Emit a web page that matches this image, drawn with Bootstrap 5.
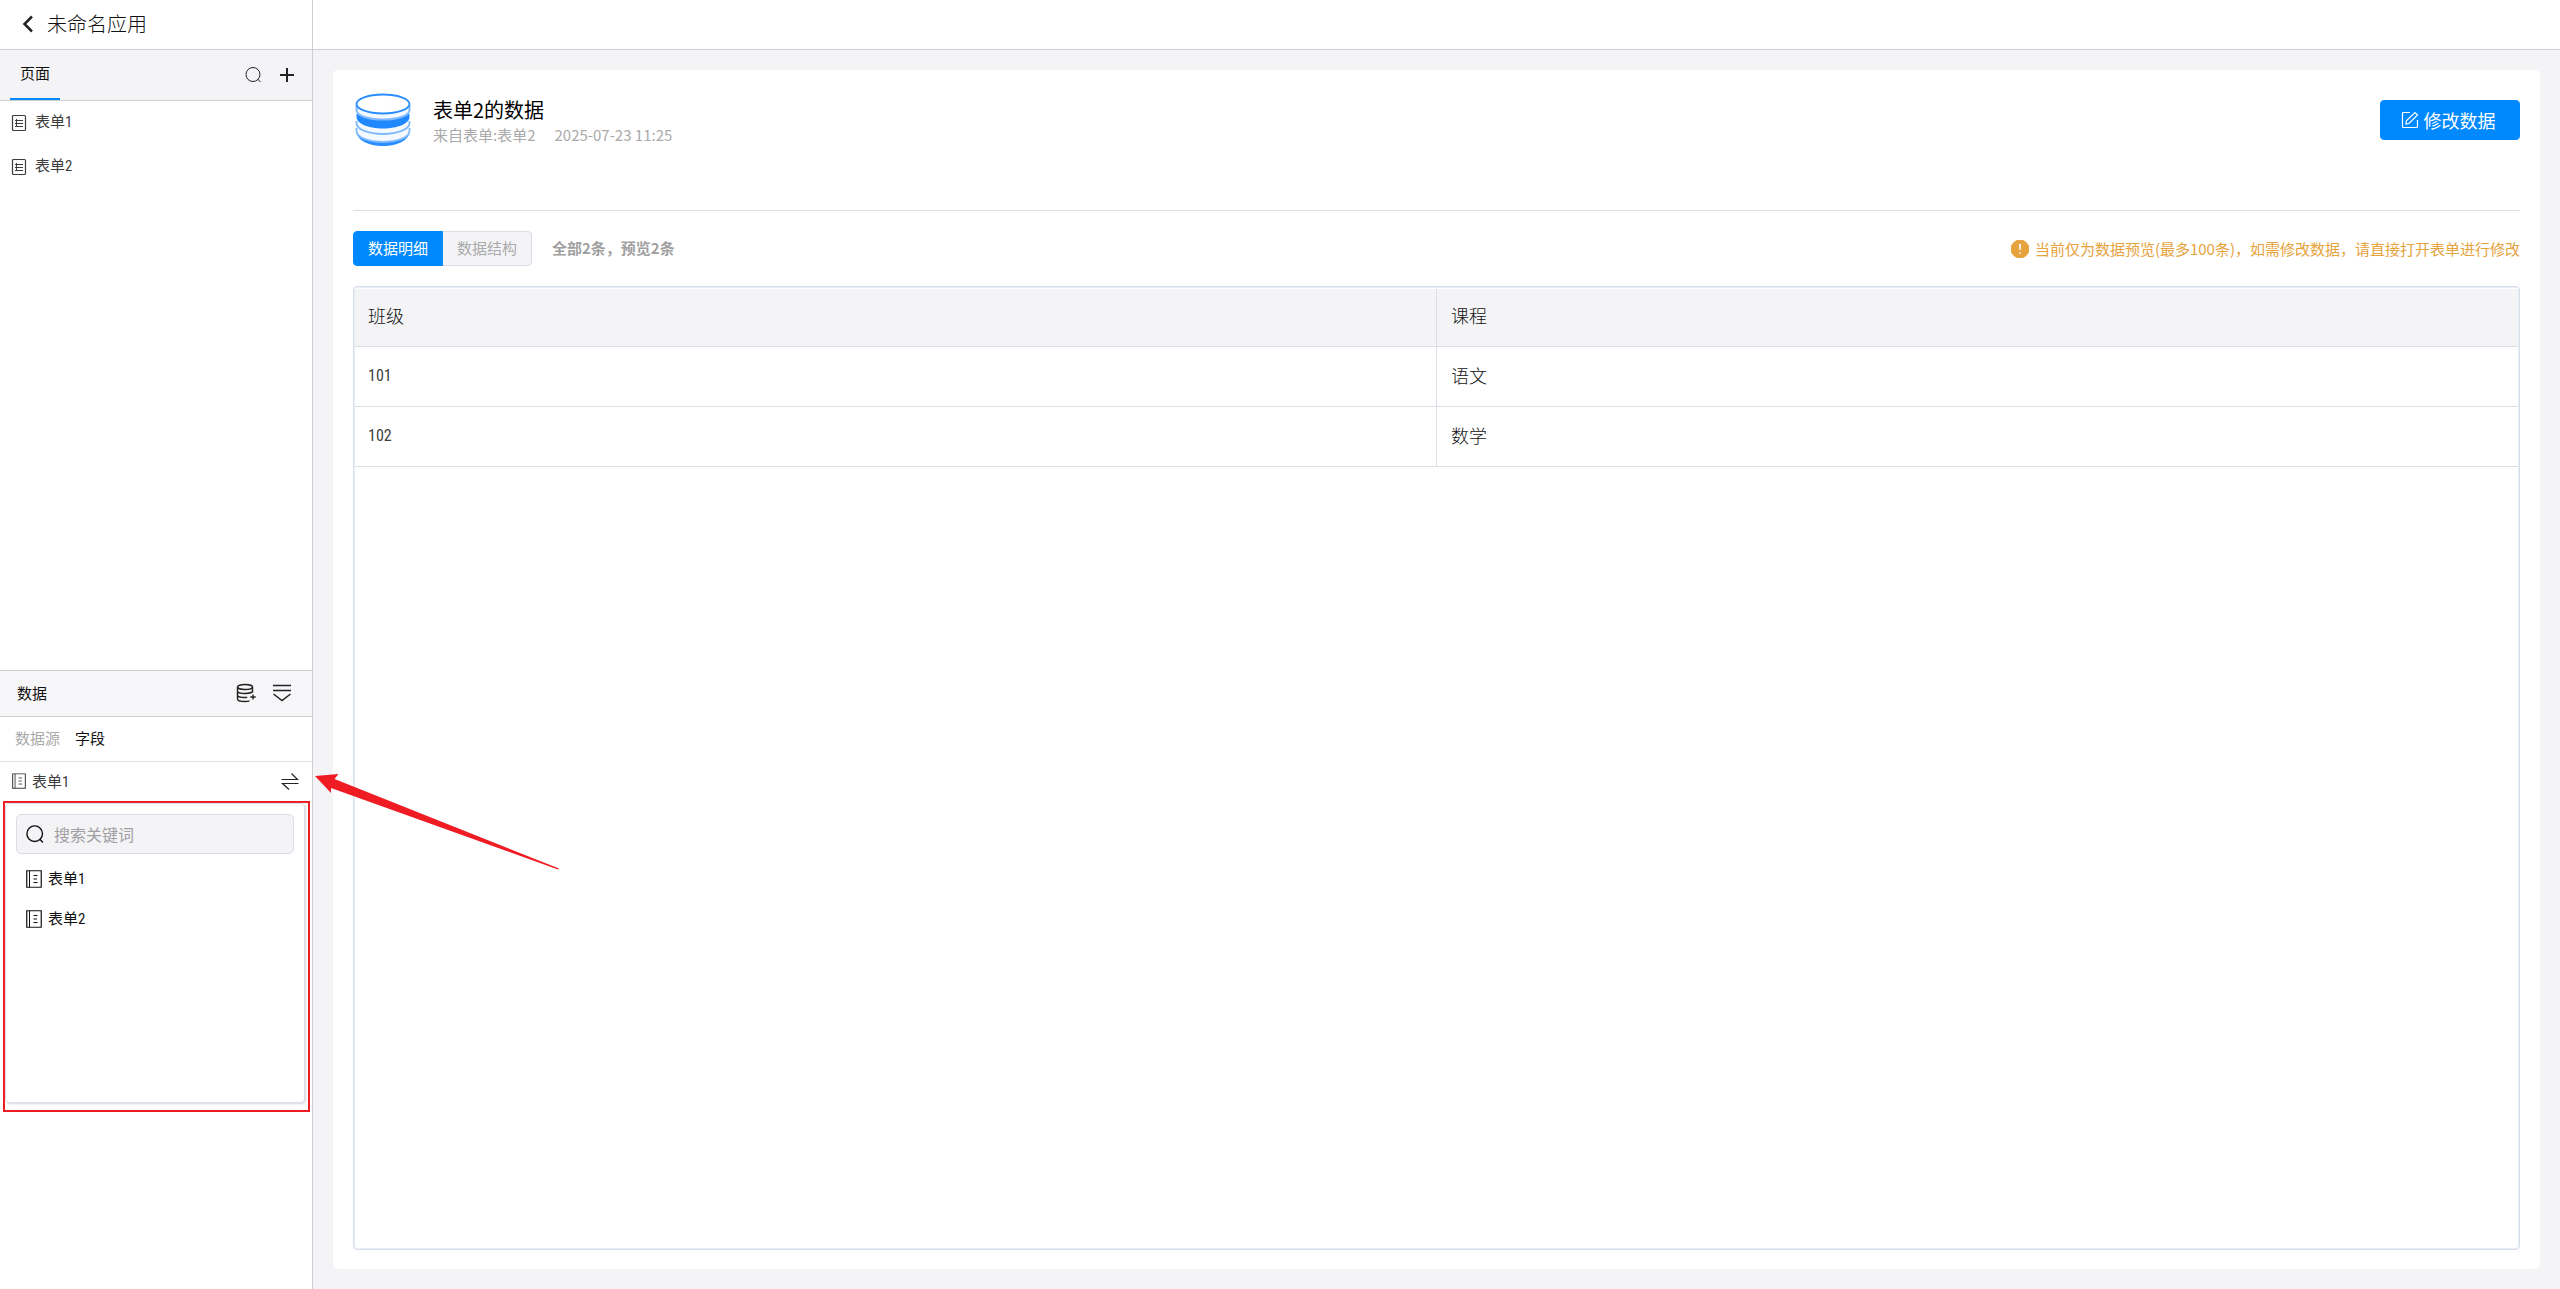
<!DOCTYPE html>
<html lang="zh-CN">
<head>
<meta charset="utf-8">
<meta name="viewport" content="width=device-width, initial-scale=1">
<title>未命名应用</title>
<link href="https://cdn.jsdelivr.net/npm/bootstrap@5.3.0/dist/css/bootstrap.min.css" rel="stylesheet">
<style>
  :root { --line: #cfcfd1; --soft: #dbdee7; --panel: #f4f4f7; --blue: #0089ff; --ink: #3d3d3d; --mute: #aaa; --alert: #e6a23c; }
  body { font-family: "Noto Sans CJK SC", "Noto Sans", sans-serif; font-size: 15px; line-height: 22px; color: #111; background: #fff; }
  svg { display: block; flex: none; fill: none; stroke: currentColor; }
  .btn { --bs-btn-font-size: 15px; --bs-btn-line-height: 22px; }
  .num { font-family: "Liberation Sans Narrow", "Roboto Condensed", Roboto, sans-serif; }
  .side { width: 313px; border-right: 1px solid var(--line); }
  .topline { height: 50px; border-bottom: 1px solid var(--line); }
  .app-title { font-size: 20px; line-height: 28px; font-weight: 300; color: #111; padding-left: 21px; padding-bottom: 2px; }
  .icon-btn { color: #222; border: 0; padding: 0; background: none; }
  .pages { flex: 1 1 1px; }
  .sources { flex: 1 1 0; border-top: 1px solid var(--line); }
  .pages-head { height: 51px; background: var(--panel); border-bottom: 1px solid var(--line); padding: 0 17px 0 10px; }
  .page-tab { width: 50px; border-bottom: 2px solid var(--blue); padding: 12px 0 0 10px; color: #111; text-decoration: none; }
  .page-link-row { height: 44px; padding: 0 11px; gap: 8px; color: var(--ink); text-decoration: none; }
  .page-link-row span { line-height: 20px; }
  .sources-head { height: 46px; background: #f6f6f8; border-bottom: 1px solid var(--line); padding: 0 20px 0 17px; }
  .sources-tabs { height: 45px; border-bottom: 1px solid var(--soft); padding: 0 15px 2px; gap: 15px; }
  .sources-tabs a { color: #111; text-decoration: none; }
  .sources-tabs a.off { color: var(--mute); }
  .current-row { height: 39px; padding: 0 12px; gap: 6px; color: var(--ink); }
  .frame { border: 2px solid #ef1c24; margin: 0 2px 0 3px; height: 311px; padding-right: 3px; }
  .picker { height: 300px; border: 1px solid var(--soft); border-radius: 4px; box-shadow: 1px 1px 2px #d5d9e3; padding: 10px; }
  .find { height: 40px; background: var(--panel); border: 1px solid var(--soft); border-radius: 5px; padding: 0 9px; }
  .find input { font-size: 16px; line-height: 24px; padding: 0 0 0 10px; }
  .find input::placeholder { color: #a0a0a3; }
  .picker-list { padding-top: 5px; }
  .picker-item { height: 40px; padding-left: 10px; gap: 6px; color: #111; text-decoration: none; }
  .work { background: var(--panel); padding: 20px; }
  .sheet { background: #fff; border-radius: 5px; padding: 20px 20px 19px; }
  .sheet-head { height: 121px; border-bottom: 1px solid var(--soft); }
  .sheet-title { font-size: 20px; line-height: 28px; color: #000; margin: 6px 0 0; font-weight: 400; }
  .sheet-meta { color: var(--mute); gap: 19px; }
  .edit-btn { --bs-btn-bg: var(--blue); --bs-btn-border-color: var(--blue); --bs-btn-color: #fff; --bs-btn-font-size: 18px; --bs-btn-font-weight: 400; --bs-btn-border-radius: 4px; width: 140px; height: 40px; margin-top: 10px; gap: 5px; }
  .toolbar-row { padding: 20px 0; }
  .seg .btn { width: 90px; height: 35px; padding: 0 0 2px; --bs-btn-border-radius: 4px; --bs-btn-bg: var(--panel); --bs-btn-border-color: var(--soft); --bs-btn-color: var(--mute); --bs-btn-active-bg: var(--blue); --bs-btn-active-border-color: var(--blue); --bs-btn-active-color: #fff; }
  .count { color: #a0a0a0; font-weight: 700; padding-bottom: 2px; }
  .tip { color: var(--alert); gap: 6px; }
  .grid-box { border: 1px solid #d9dfe8; border-radius: 4px; box-shadow: inset 0 0 0 1px #e9edf5; padding: 2px 1px; }
  .grid-table { table-layout: fixed; --bs-table-bg: transparent; font-size: 18px; line-height: 27px; }
  .grid-table th, .grid-table td { height: 60px; padding: 0 15px 2px 13px; border-bottom: 1px solid var(--soft); color: #111; font-weight: 300; vertical-align: middle; }
  .grid-table td.num { font-size: 16px; font-weight: 400; color: var(--ink); }
  .grid-table thead th { height: 57px; background: var(--panel); padding-bottom: 4px; }
  .grid-table th:first-child { width: calc(50% - 1px); }
  .grid-table tr > :last-child { border-left: 1px solid var(--soft); padding-left: 14px; }
  .pointer { position: absolute; left: 314px; top: 770px; z-index: 5; }
</style>
<script src="https://cdn.jsdelivr.net/npm/bootstrap@5.3.0/dist/js/bootstrap.bundle.min.js"></script>
</head>
<body>
<svg width="0" height="0" class="position-absolute" aria-hidden="true">
  <symbol id="form" viewBox="0 0 16 18"><rect x="1.500" y="1.500" width="13" height="15" rx="1" stroke-width="1.200"/><path d="M5.500 5v8M4 6.500h8M4 9.500h8M4 12.500h8"/></symbol>
  <symbol id="book" viewBox="0 0 16 18"><path d="M.750.750h14.500v16.500H.750z" stroke-width="1.200"/><path d="M3.500.750v16.500M7.500 5.500h4M7.500 9h3.500M7.500 12.500h4" stroke-width="1"/></symbol>
</svg>
<div class="d-flex min-vh-100">
  <aside class="side d-flex flex-column flex-shrink-0">
    <header class="topline app-title d-flex align-items-center">
      <button class="icon-btn me-2" type="button" aria-label="返回"><svg width="14" height="18" viewBox="0 0 14 18" stroke="#444" stroke-width="2.500"><path d="M11 1.500 3.500 9l7.500 7.500"/></svg></button>
      <span class="ms-1">未命名应用</span>
    </header>

    <section class="pages">
      <div class="pages-head d-flex">
        <a class="page-tab" href="#">页面</a>
        <div class="ms-auto d-flex align-items-center">
          <button class="icon-btn" type="button" aria-label="搜索页面"><svg width="16" height="16" viewBox="0 0 16 16" stroke="#555"><circle cx="8" cy="7.500" r="7"/><path d="m12.500 12 3 3"/></svg></button>
          <button class="icon-btn ms-3" type="button" aria-label="新建页面"><svg width="18" height="16" viewBox="0 0 18 16" stroke="#000" stroke-width="2"><path d="M10 1v14M3 8h14"/></svg></button>
        </div>
      </div>
      <a class="page-link-row d-flex align-items-center" href="#"><svg width="16" height="18"><use href="#form"/></svg><span class="pb-1">表单<span class="num">1</span></span></a>
      <a class="page-link-row d-flex align-items-center" href="#"><svg width="16" height="18"><use href="#form"/></svg><span class="pb-1">表单<span class="num">2</span></span></a>
    </section>

    <section class="sources">
      <div class="sources-head d-flex align-items-center">
        <span>数据</span>
        <button class="icon-btn ms-auto" type="button" aria-label="添加数据"><svg width="20" height="20" viewBox="0 0 20 20" stroke-width="1.400"><ellipse cx="9" cy="4" rx="7.500" ry="2.500"/><path d="M1.500 4v12c0 1.400 3.300 2.500 7.500 2.500 2 0 3.500-.2 4.500-.600M16.500 4v5.500M1.500 8c0 1.400 3.300 2.500 7.500 2.500S16.500 9.400 16.500 8M1.500 12c0 1.400 3.300 2.500 7.500 2.500 1 0 1.500-.1 2.200-.200M17 11.500v5M14.300 14h5.400"/></svg></button>
        <button class="icon-btn ms-3" type="button" aria-label="收起"><svg width="20" height="18" viewBox="0 0 20 18" stroke-width="1.500"><path d="M1 1.500h18M1 6.500h18M1.500 10 10 16.500 18.500 10"/></svg></button>
      </div>
      <nav class="sources-tabs d-flex align-items-center"><a class="off" href="#">数据源</a><a href="#">字段</a></nav>
      <div class="current-row d-flex align-items-center">
        <svg width="14" height="16" viewBox="0 0 16 18"><use href="#book"/></svg>
        <span>表单<span class="num">1</span></span>
        <button class="icon-btn ms-auto" type="button" aria-label="切换"><svg width="20" height="18" viewBox="0 0 20 18" stroke="#555" stroke-width="1.200"><path d="M1.500 7.500H17.500L11.500 1.500M18.500 11.500H2.500l6.500 6"/></svg></button>
      </div>
      <div class="frame">
        <div class="picker">
          <label class="find d-flex align-items-center">
            <svg width="18" height="18" viewBox="0 0 18 18" stroke-width="1.400"><circle cx="8.700" cy="8.700" r="7.800"/><path d="m13.500 14 3.500 3.500"/></svg>
            <input class="form-control border-0 bg-transparent shadow-none" type="text" placeholder="搜索关键词" aria-label="搜索关键词">
          </label>
          <div class="picker-list">
            <a class="picker-item d-flex align-items-center" href="#"><svg width="16" height="18"><use href="#book"/></svg><span>表单<span class="num">1</span></span></a>
            <a class="picker-item d-flex align-items-center" href="#"><svg width="16" height="18"><use href="#book"/></svg><span>表单<span class="num">2</span></span></a>
          </div>
        </div>
      </div>
    </section>
  </aside>

  <div class="d-flex flex-column flex-fill">
    <div class="topline"></div>
    <main class="work d-flex flex-column flex-fill">
      <div class="sheet d-flex flex-column flex-fill">
        <div class="sheet-head d-flex">
          <svg width="60" height="60" viewBox="0 0 60 60" class="me-3" aria-hidden="true">
            <path d="M4 43c0 7 12 13 26 13S56 50 56 43" fill="#2a8dff" stroke="none"/>
            <path d="M3.500 38v3c0 6.500 12 11 26.500 11s26.500-4.500 26.500-11v-3" fill="#f3f9ff" stroke="#7fbaff" stroke-width="1.800"/>
            <path d="M3.500 31v2c0 6.500 12 11 26.500 11s26.500-4.500 26.500-11v-2" fill="#f3f9ff" stroke="#7fbaff" stroke-width="1.800"/>
            <path d="M3.500 24v3c0 6.500 12 11.500 26.500 11.500S56.500 33.500 56.500 27v-3z" fill="#1f88ff" stroke="none"/>
            <path d="M3.500 15v5C3.500 26 15.500 29.500 30 29.500s26.500-3.500 26.500-9.500v-5" fill="#f3f9ff" stroke="#80b9ff" stroke-width="2"/>
            <ellipse cx="30" cy="14" rx="26.500" ry="9.500" fill="#fff" stroke="#2a8dff" stroke-width="1.800"/>
          </svg>
          <div class="ms-1">
            <h1 class="sheet-title">表单2的数据</h1>
            <div class="sheet-meta d-flex"><span>来自表单:表单2</span><span>2025-07-23 11:25</span></div>
          </div>
          <button class="btn edit-btn d-flex align-items-center justify-content-center ms-auto py-0 ps-0 pe-1" type="button">
            <svg width="18" height="18" viewBox="0 0 18 18" stroke-width="1.200"><path d="M9 1.500H2.500a1 1 0 0 0-1 1v13a1 1 0 0 0 1 1h13a1 1 0 0 0 1-1V9M5 13l.5-3.500 8.500-8 2.500 2.500-8.500 8.500z"/></svg>修改数据
          </button>
        </div>
        <div class="toolbar-row d-flex align-items-center">
          <div class="seg btn-group" role="group" aria-label="视图">
            <button class="btn active" type="button">数据明细</button>
            <button class="btn" type="button">数据结构</button>
          </div>
          <div class="count ms-3 ps-1">全部2条，预览2条</div>
          <div class="tip d-flex align-items-center ms-auto">
            <svg width="18" height="18" viewBox="0 0 18 18" stroke="none"><circle cx="9" cy="9" r="9" fill="#e6a23c"/><path d="M7.500 3.500h3l-.4 7H7.900zM7.800 11.800h2.400v2.400H7.800z" fill="#fff"/></svg>
            <span>当前仅为数据预览(最多100条)，如需修改数据，请直接打开表单进行修改</span>
          </div>
        </div>
        <div class="grid-box flex-fill">
          <table class="table grid-table mb-0">
            <thead><tr><th scope="col">班级</th><th scope="col">课程</th></tr></thead>
            <tbody>
              <tr><td class="num">101</td><td>语文</td></tr>
              <tr><td class="num">102</td><td>数学</td></tr>
            </tbody>
          </table>
        </div>
      </div>
    </main>
  </div>
</div>
<svg class="pointer" width="248" height="102" viewBox="0 0 248 102" aria-hidden="true"><path d="M1 6 24.500 4 20.500 9 245 98.500 244 99.500 17 18V23z" fill="#ef1c24" stroke="none"/></svg>
</body>
</html>
